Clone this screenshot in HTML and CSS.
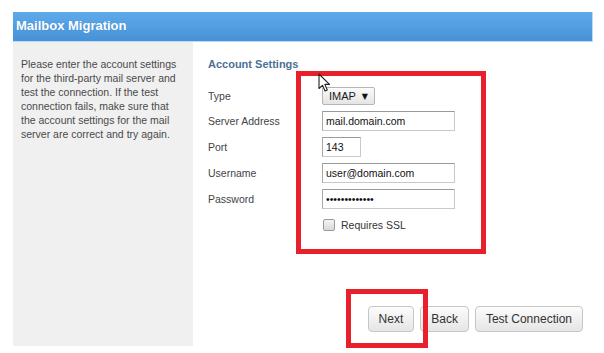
FILE: index.html
```html
<!DOCTYPE html>
<html lang="en">
<head>
    <meta charset="UTF-8">
    <meta name="viewport" content="width=device-width, initial-scale=1.0">
    <title>Mailbox Migration</title>
    <link rel="stylesheet" href="styles.css">
</head>
<body>
<div class="screen">

    <div class="dialog">
        <div class="titlebar">Mailbox Migration</div>

        <div class="dialog-body">
            <aside class="help">
                <p>Please enter the account settings for the third-party mail server and test the connection. If the test connection fails, make sure that the account settings for the mail server are correct and try again.</p>
            </aside>

            <main class="pane">
                <h2 class="section-title">Account Settings</h2>

                <div class="form">
                    <label class="label">Type</label>
                    <div class="field"><button class="select">IMAP <span class="caret">&#9660;</span></button></div>

                    <label class="label">Server Address</label>
                    <div class="field"><input class="text-input wide" type="text" value="mail.domain.com"></div>

                    <label class="label">Port</label>
                    <div class="field"><input class="text-input short" type="text" value="143"></div>

                    <label class="label">Username</label>
                    <div class="field"><input class="text-input wide" type="text" value="user@domain.com"></div>

                    <label class="label">Password</label>
                    <div class="field"><input class="text-input wide" type="password" value="passwordpass1"></div>

                    <span></span>
                    <div class="field check-row"><span class="checkbox"></span> Requires SSL</div>
                </div>

                <div class="actions">
                    <button class="btn">Next</button>
                    <button class="btn">Back</button>
                    <button class="btn">Test Connection</button>
                </div>
            </main>
        </div>
    </div>

    <!-- annotation marks -->
    <div class="mark mark-form"></div>
    <div class="mark mark-next"></div>

    <svg class="pointer" width="13" height="20" viewBox="0 0 13 20">
        <path d="M1 1 L1 15.5 L4.5 12.3 L7 18 L9.3 17 L6.8 11.4 L11.5 11.4 Z" fill="#fff" stroke="#222" stroke-width="1.1" stroke-linejoin="round"/>
    </svg>

</div>
</body>
</html>
```

FILE: styles.css
```css
body {
    margin: 0;
    background-color: #fff;
    font-family: 'Liberation Sans', Arial, sans-serif;
    color: #444;
}

.screen {
    position: relative;
    width: 604px;
    height: 353px;
    overflow: hidden;
}

.dialog {
    width: 580px;
    margin: 12px 0 0 13px;
}

.titlebar {
    height: 29px;
    line-height: 28px;
    padding-left: 3px;
    color: #fff;
    font-size: 13px;
    font-weight: 700;
    background: linear-gradient(#5eaaeb, #4792d6);
    border-right: 1px solid #b9dbf7;
    border-bottom: 1px solid #b9dbf7;
    text-shadow: 0 0 1px rgba(0, 0, 0, 0.15);
}

.dialog-body {
    display: flex;
    height: 304px;
}

.help {
    width: 180px;
    flex: none;
    box-sizing: border-box;
    padding: 15px 9px 0 8px;
    background-color: #f0f0f0;
    color: #4a4a4a;
    font-size: 10.5px;
    line-height: 14px;
}

.help p {
    margin: 0;
}

.pane {
    flex: 1;
    display: flex;
    flex-direction: column;
    padding: 15px 10px 14px 15px;
}

.section-title {
    margin: 0 0 16px;
    font-size: 11px;
    line-height: 14px;
    color: #4c7194;
}

.form {
    display: grid;
    grid-template-columns: 114px auto;
    row-gap: 6px;
    align-items: center;
    font-size: 10.5px;
}

.label {
    color: #444;
}

.field {
    display: flex;
    align-items: center;
}

.select {
    height: 18px;
    width: 53px;
    box-sizing: border-box;
    padding: 0 0 0 6px;
    text-align: left;
    font-family: 'Liberation Sans', Arial, sans-serif;
    font-size: 11px;
    color: #1a1a1a;
    background: linear-gradient(#fbfbfb, #e4e4e4);
    border: 1px solid #b5b5b5;
    border-radius: 2px;
}

.caret {
    font-family: 'DejaVu Sans', sans-serif;
    font-size: 8px;
    margin-left: 3px;
    position: relative;
    top: -1px;
    color: #111;
}

.text-input {
    height: 20px;
    box-sizing: border-box;
    padding: 0 3px;
    font-family: 'Liberation Sans', Arial, sans-serif;
    font-size: 10.5px;
    color: #111;
    background-color: #fff;
    border: 1px solid #c9c9c9;
    border-top-color: #9a9a9a;
    border-left-color: #a8a8a8;
    border-radius: 0;
    outline: none;
}

.wide {
    width: 133px;
}

.short {
    width: 39px;
}

.check-row {
    margin-top: 4px;
    gap: 6px;
    color: #333;
}

.checkbox {
    width: 10px;
    height: 10px;
    margin-left: 1px;
    border: 1px solid #9b9b9b;
    border-radius: 2px;
    background: linear-gradient(#f4f4f4, #d9d9d9);
}

.actions {
    margin-top: auto;
    display: flex;
    justify-content: flex-end;
    gap: 6px;
}

.btn {
    height: 26px;
    padding: 0 10px;
    font-family: 'Liberation Sans', Arial, sans-serif;
    font-size: 12px;
    color: #333;
    background: linear-gradient(#fcfcfc, #e5e5e5);
    border: 1px solid #c6c6c6;
    border-radius: 4px;
}

/* red annotation boxes drawn over the screenshot */
.mark {
    position: absolute;
    border: 5px solid #e8202b;
}

.mark-form {
    left: 296px;
    top: 71px;
    width: 180px;
    height: 173px;
}

.mark-next {
    left: 346px;
    top: 289px;
    width: 72px;
    height: 49px;
}

.pointer {
    position: absolute;
    left: 318px;
    top: 73px;
}
```
